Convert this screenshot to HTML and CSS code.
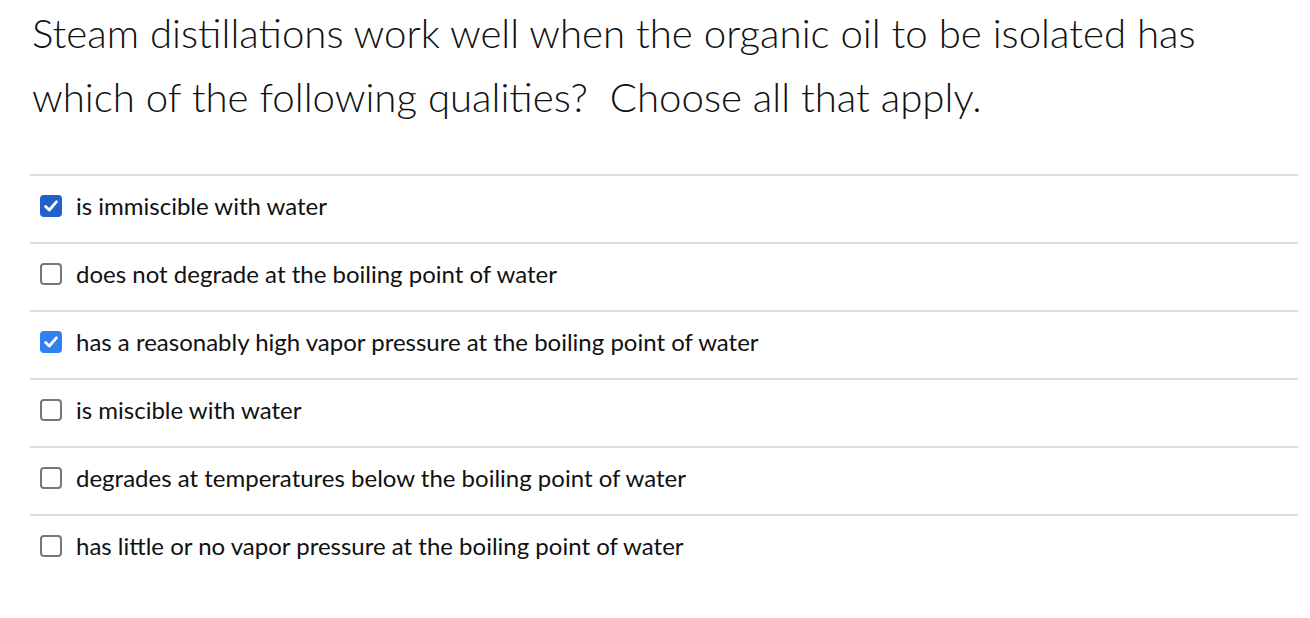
FILE: index.html
```html
<!DOCTYPE html>
<html>
<head>
<meta charset="utf-8">
<link rel="stylesheet" href="styles.css">
</head>
<body>
<div class="question">
  <div class="question-text">Steam distillations work well when the organic oil to be isolated has which of the following qualities?&nbsp; Choose all that apply.</div>
  <div class="answers">
    <label class="answer"><span class="box checked"><svg viewBox="0 0 22 22" width="22" height="22"><path d="M5.6 11.4 L9.3 15 L16.4 6.8" fill="none" stroke="#fff" stroke-width="2.8" stroke-linecap="round" stroke-linejoin="round"/></svg></span><span class="label">is immiscible with water</span></label>
    <label class="answer"><span class="box"></span><span class="label">does not degrade at the boiling point of water</span></label>
    <label class="answer"><span class="box checked bright"><svg viewBox="0 0 22 22" width="22" height="22"><path d="M5.6 11.4 L9.3 15 L16.4 6.8" fill="none" stroke="#fff" stroke-width="2.8" stroke-linecap="round" stroke-linejoin="round"/></svg></span><span class="label">has a reasonably high vapor pressure at the boiling point of water</span></label>
    <label class="answer"><span class="box"></span><span class="label">is miscible with water</span></label>
    <label class="answer"><span class="box"></span><span class="label">degrades at temperatures below the boiling point of water</span></label>
    <label class="answer"><span class="box"></span><span class="label">has little or no vapor pressure at the boiling point of water</span></label>
  </div>
</div>
</body>
</html>
```

FILE: styles.css
```css
html, body {
  margin: 0;
  padding: 0;
  background: #fff;
}
body {
  font-family: "Lato", "Open Sans", sans-serif;
  color: #111;
}
.question {
  padding: 1px 12px 0 30px;
}
.question-text {
  font-size: 40.2px;
  font-weight: 300;
  line-height: 64px;
  padding-left: 2px;
  margin-bottom: 45px;
  width: 1240px;
}
.answers {
  border-top: 2px solid #dcdcdc;
}
.answer {
  display: flex;
  align-items: center;
  gap: 14px;
  height: 59px;
  padding: 0 0 7px 10px;
  border-bottom: 2px solid #dcdcdc;
  font-size: 24px;
  color: #111;
}
.answer:last-child {
  border-bottom: none;
}
.box {
  width: 18px;
  height: 18px;
  border: 2px solid #777;
  border-radius: 4px;
  box-sizing: content-box;
  display: flex;
  flex: none;
}
.box.checked {
  width: 22px;
  height: 22px;
  border: none;
  background: #2260cc;
}
.box.checked.bright {
  background: #2f80f0;
}
.box svg { width: 22px; height: 22px; }
```
